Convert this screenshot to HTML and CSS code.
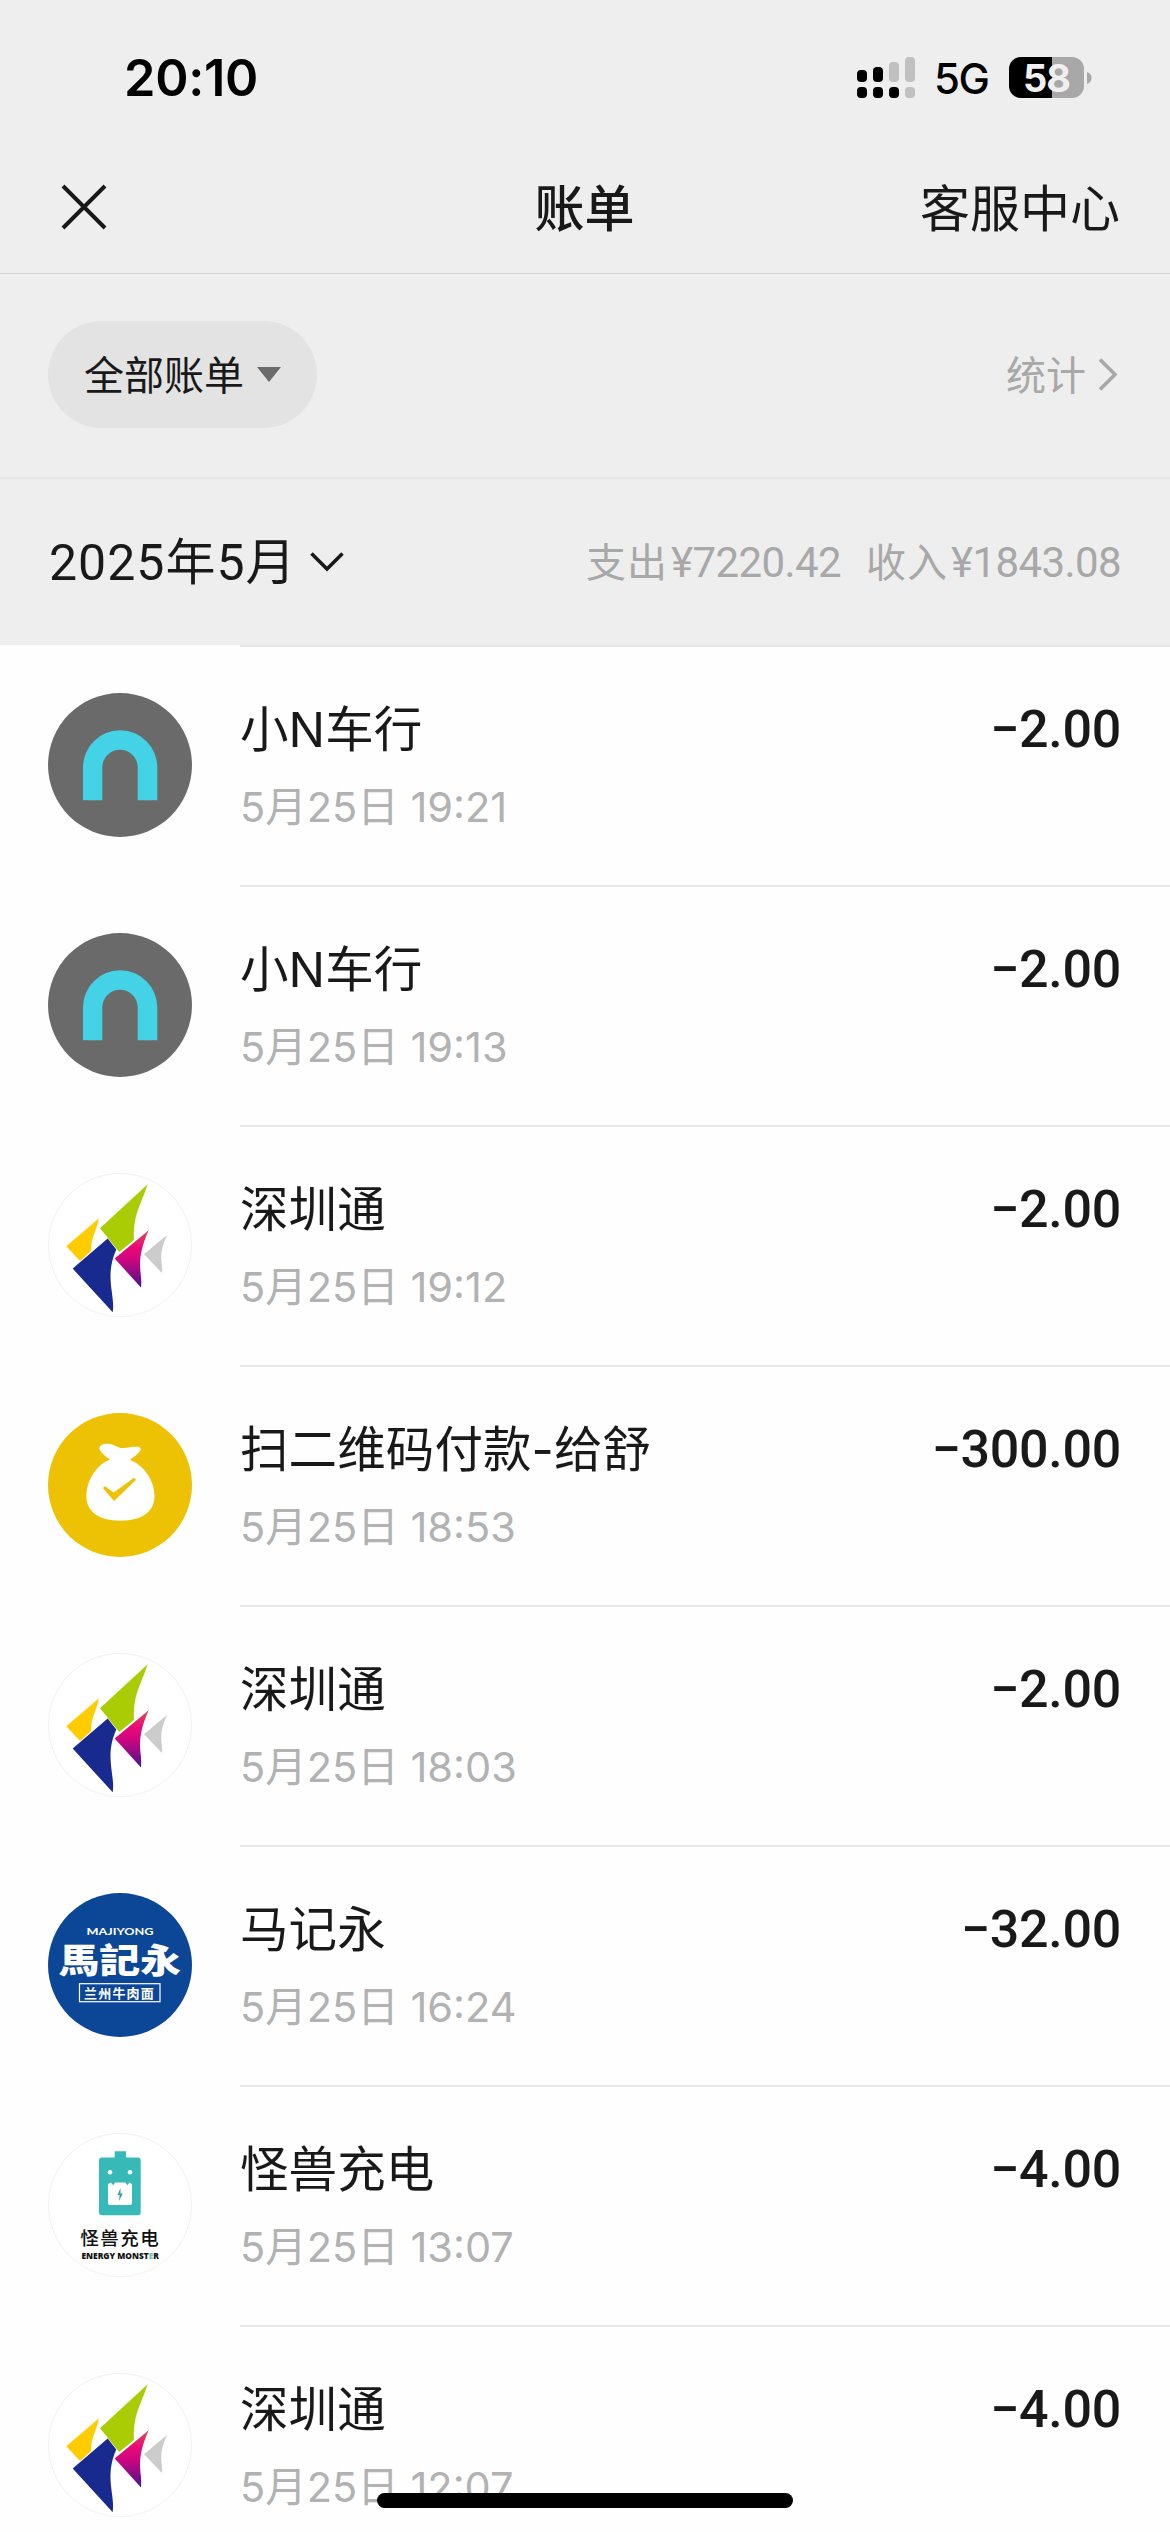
FILE: index.html
```html
<!DOCTYPE html>
<html lang="zh-CN">
<head>
<meta charset="utf-8">
<title>账单</title>
<link rel="stylesheet" href="styles.css">
</head>
<body>
<svg width="0" height="0" class="defs">
  <defs>
    <linearGradient id="pink" x1="0" y1="0" x2="0" y2="1">
      <stop offset="0" stop-color="#d2505c"/><stop offset=".3" stop-color="#ea0878"/><stop offset=".5" stop-color="#d0067e"/><stop offset="1" stop-color="#4a128c"/>
    </linearGradient>
    <symbol id="niu" viewBox="0 0 144 144">
      <circle cx="72" cy="72" r="72" fill="#6a6a6a"/>
      <path fill="#43d2e6" d="M35 107.3V74.4a37.15 37.15 0 0 1 74.3 0v32.9H89.7V74.4a17.7 17.7 0 0 0-35.4 0v32.9z"/>
    </symbol>
    <symbol id="szt" viewBox="0 0 144 144">
      <circle cx="72" cy="72" r="71.5" fill="#fff" stroke="#f1f1f1"/>
      <path fill="#a9cc04" d="M99.7 11.3L52 55.3L71.3 79L86 67C85 42 92 34 99.7 11.3z"/>
      <path fill="#fc0" d="M51 45.3L18.3 73.3L32 88L43 78C43 64 48 60 51 45.3z"/>
      <path fill="#182a8e" d="M59.7 65.6L24.7 95.6L64.7 139.3C67.500 122 56 104 68.300 76.600z"/>
      <path fill="url(#pink)" d="M100.700 57.300L66.700 85.600L93 114.600C95 99 86 90 100.700 57.300z"/>
      <path fill="#ccc" d="M119 62L96 81.300L114 100C115.500 90 109 84 119 62z"/>
    </symbol>
    <symbol id="bag" viewBox="0 0 144 144">
      <circle cx="72" cy="72" r="72" fill="#edc205"/>
      <path fill="#fff" d="M62 46.500C58 43.500 53 40 51.400 36C51 32 56 30.300 60 30.700C66 31 69 35 75 35C81 35 83 33 87 34C91 32.800 94 35 92 38C89 42 85 44 82 47C94 51 106.500 66 106.500 83C106.500 99 94 107.700 72.500 107.700C51 107.700 38.400 99 38.400 83C38.400 66 50 51 62 46.500z"/>
      <path fill="#edc205" d="M54.800 75L57 73.300L65.700 79.500L86 64.700L88 66.700L66 88z"/>
    </symbol>
    <symbol id="mjy" viewBox="0 0 144 144">
      <circle cx="72" cy="72" r="72" fill="#0c4697"/>
      <text class="mjy-latin" x="38.500" y="42" textLength="67" lengthAdjust="spacingAndGlyphs">MAJIYONG</text>
      <text class="mjy-name" transform="translate(10.500 79.500) scale(1.200 1)" x="0" y="0">馬記永</text>
      <rect x="31.500" y="90.700" width="80.500" height="18" fill="none" stroke="#fff" stroke-width="1.200"/>
      <text class="mjy-sub" x="36" y="104.500">兰州牛肉面</text>
    </symbol>
    <symbol id="monster" viewBox="0 0 144 144">
      <circle cx="72" cy="72" r="71.500" fill="#fff" stroke="#f1f1f1"/>
      <path fill="#37bab7" d="M66.700 18.300H78V24.600H89.700a3 3 0 0 1 3 3V79.300a3 3 0 0 1-3 3H54a3 3 0 0 1-3-3V27.600a3 3 0 0 1 3-3H66.700z"/>
      <circle cx="62" cy="39.300" r="2.300" fill="#fff"/><circle cx="82" cy="39.300" r="2.300" fill="#fff"/>
      <path fill="#fff" d="M60 51L63 49.600L65.200 52.300L67 49.600H77.500L79.300 52.300L81.500 49.600L84 51V70a2 2 0 0 1-2 2H62a2 2 0 0 1-2-2z"/>
      <path fill="#37a0a0" d="M72.500 55L69.500 62H71.600L71 68L74.800 60.500H72.500z"/>
      <text class="mon-name" x="32.300" y="112">怪兽充电</text>
      <text class="mon-sub" x="33.500" y="126" textLength="77.500" lengthAdjust="spacingAndGlyphs">ENERGY MONST<tspan fill="#6cc9b0">E</tspan>R</text>
    </symbol>
  </defs>
</svg>
<div class="screen">
  <div class="status">
    <span class="time">20:10</span>
    <div class="status-right">
      <svg class="signal" width="58" height="41" viewBox="0 0 58 41">
        <g fill="#c0c0c0"><rect x="32" y="5" width="10" height="20" rx="4"/><rect x="48" width="10" height="25" rx="4"/><rect x="48" y="30" width="10" height="11" rx="4"/></g>
        <rect y="13" width="10" height="12" rx="4"/><rect x="16" y="10" width="10" height="15" rx="4"/><rect y="30" width="10" height="11" rx="4"/><rect x="16" y="30" width="10" height="11" rx="4"/><rect x="32" y="30" width="10" height="11" rx="4"/>
      </svg>
      <span class="net">5G</span>
      <div class="battery"><span>58</span></div>
      <svg width="5" height="12" viewBox="0 0 5 12"><path fill="#a8a8a8" d="M0 0Q4.500 1.500 4.500 6T0 12z"/></svg>
    </div>
  </div>
  <header class="nav">
    <svg class="close" width="46" height="46" viewBox="0 0 46 46"><path d="M2 2L44 44M44 2L2 44" fill="none" stroke="#191919" stroke-width="4"/></svg>
    <h1>账单</h1>
    <span class="service">客服中心</span>
  </header>
  <div class="filter">
    <div class="pill"><span>全部账单</span><svg width="24" height="15" viewBox="0 0 24 15"><path fill="#6b6b6b" d="M0 0H24L12 15z"/></svg></div>
    <div class="stats"><span>统计</span><svg width="20" height="33" viewBox="0 0 20 33"><path fill="none" stroke="#a8a8a8" stroke-width="3.600" d="M2 1.500L17 16.500L2 31.500"/></svg></div>
  </div>
  <div class="month">
    <div class="month-name"><span>2025年5月</span><svg width="34" height="20" viewBox="0 0 34 20"><path fill="none" stroke="#191919" stroke-width="3.600" d="M1.500 1.500L17 17L32.500 1.500"/></svg></div>
    <div class="totals"><span><b>支出</b>¥7220.42</span><span><b>收入</b>¥1843.08</span></div>
  </div>
  <main class="list">
    <div class="row"><svg class="logo"><use href="#niu"/></svg><div class="body"><div class="info"><div class="title">小N车行</div><div class="date">5月25日 19:21</div></div><div class="amount">−2.00</div></div></div>
    <div class="row"><svg class="logo"><use href="#niu"/></svg><div class="body"><div class="info"><div class="title">小N车行</div><div class="date">5月25日 19:13</div></div><div class="amount">−2.00</div></div></div>
    <div class="row"><svg class="logo"><use href="#szt"/></svg><div class="body"><div class="info"><div class="title">深圳通</div><div class="date">5月25日 19:12</div></div><div class="amount">−2.00</div></div></div>
    <div class="row"><svg class="logo"><use href="#bag"/></svg><div class="body"><div class="info"><div class="title">扫二维码付款-给舒</div><div class="date">5月25日 18:53</div></div><div class="amount">−300.00</div></div></div>
    <div class="row"><svg class="logo"><use href="#szt"/></svg><div class="body"><div class="info"><div class="title">深圳通</div><div class="date">5月25日 18:03</div></div><div class="amount">−2.00</div></div></div>
    <div class="row"><svg class="logo"><use href="#mjy"/></svg><div class="body"><div class="info"><div class="title">马记永</div><div class="date">5月25日 16:24</div></div><div class="amount">−32.00</div></div></div>
    <div class="row"><svg class="logo"><use href="#monster"/></svg><div class="body"><div class="info"><div class="title">怪兽充电</div><div class="date">5月25日 13:07</div></div><div class="amount">−4.00</div></div></div>
    <div class="row"><svg class="logo"><use href="#szt"/></svg><div class="body"><div class="info"><div class="title">深圳通</div><div class="date">5月25日 12:07</div></div><div class="amount">−4.00</div></div></div>
  </main>
  <div class="home-bar"></div>
</div>
</body>
</html>
```
FILE: styles.css
```css
* { box-sizing: border-box; }
body { margin: 0; background: #fff; color: #191919; font-family: Inter, "Noto Sans CJK SC", sans-serif; }
svg { display: block; flex: none; }
.defs { position: absolute; }
.screen { position: relative; width: 1170px; height: 2532px; overflow: hidden; background: #fefefe; display: flex; flex-direction: column; white-space: nowrap; }

.status { height: 141px; flex: none; background: #eee; display: flex; justify-content: space-between; padding: 14px 78px 0 124px; align-items: center; color: #000; }
.time { font-size: 50.5px; font-weight: 600; letter-spacing: -0.3px; line-height: 60px; }
.status-right { display: flex; align-items: center; }
.net { font-size: 42px; line-height: 50px; margin-left: 19px; width: 55px; margin-right: 20px; letter-spacing: -1.5px; font-weight: 500; padding-top: 3px; }
.battery { width: 75px; height: 41px; border-radius: 12px; background: linear-gradient(90deg, #000 43px, #a8a8a8 43px); color: #f0f0f0; font-size: 38px; font-weight: 700; line-height: 42px; text-align: center; letter-spacing: -1px; margin-right: 3px; }

.nav { height: 133px; flex: none; background: #eee; border-bottom: 1px solid #d4d4d4; display: grid; grid-template-columns: 1fr auto 1fr; align-items: center; padding: 0 50px 0 61px; }
.nav h1 { margin: 0; font-size: 50px; font-weight: 500; line-height: 60px; padding: 3px 12px 0 0; }
.service { font-size: 50px; line-height: 60px; justify-self: end; padding-top: 4px; }

.filter { height: 205px; flex: none; background: #eee; border-bottom: 2px solid #e6e6e6; display: flex; justify-content: space-between; align-items: flex-start; padding: 47px 52px 0 48px; }
.pill { width: 269px; height: 107px; border-radius: 54px; background: #e3e3e3; display: flex; align-items: center; gap: 13px; padding-left: 36px; font-size: 40px; }
.pill span, .stats span { padding-bottom: 3px; }
.stats { height: 107px; display: flex; align-items: center; gap: 12px; font-size: 40px; color: #a8a8a8; }

.month { height: 166px; flex: none; background: #eee; display: flex; justify-content: space-between; align-items: center; padding: 0 49px 0 49px; }
.month-name { display: flex; align-items: center; gap: 13px; font-family: Roboto, "Noto Sans CJK SC", sans-serif; font-size: 50px; letter-spacing: 1px; }
.month-name span { padding-bottom: 9px; }
.totals { display: flex; gap: 25px; font-family: Roboto, "Noto Sans CJK SC", sans-serif; font-size: 42px; letter-spacing: -0.6px; color: #a8a8a8; padding-bottom: 5px; }
.totals b { font-weight: 400; font-size: 40px; letter-spacing: 1px; margin-right: 3px; }

.list { display: flex; flex-direction: column; flex: none; }
.row { display: flex; height: 240px; padding-left: 48px; }
.logo { width: 144px; height: 144px; margin: 48px 48px 0 0; }
.body { flex: 1; display: flex; justify-content: space-between; border-top: 2px solid #e7e7e7; padding: 51px 49px 0 0; }
.info { display: flex; flex-direction: column; }
.title { font-size: 48.5px; line-height: 64px; letter-spacing: 0.1px; }
.date { font-size: 41.5px; line-height: 56px; margin-top: 17px; color: #b2b2b2; }
.amount { font-family: Roboto, sans-serif; font-weight: 500; font-size: 52px; line-height: 64px; letter-spacing: -0.3px; }

.home-bar { position: absolute; left: 377px; top: 2493px; width: 416px; height: 15px; border-radius: 8px; background: #000; }

.mjy-latin { font: 700 9px Lato, sans-serif; fill: #fff; }
.mjy-name { font: 900 34px "Noto Sans CJK TC", sans-serif; fill: #fff; }
.mjy-sub { font: 700 13px "Noto Sans CJK SC", sans-serif; fill: #fff; letter-spacing: 1.2px; }
.mon-name { font: 500 18.500px "Noto Sans CJK SC", sans-serif; fill: #111; letter-spacing: 1.5px; }
.mon-sub { font: 800 8.500px "Open Sans", sans-serif; fill: #111; }
```
